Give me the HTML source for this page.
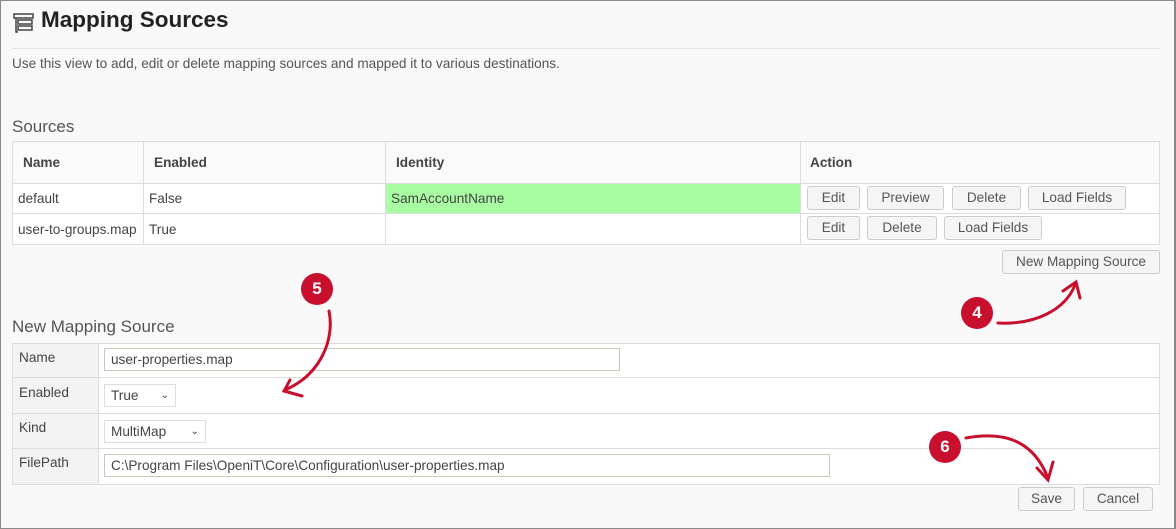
<!DOCTYPE html>
<html><head><style>
*{box-sizing:border-box;margin:0;padding:0}
body{width:1176px;height:529px;background:#f9f9f9;font-family:"Liberation Sans",sans-serif;color:#444;position:relative;overflow:hidden;font-size:13.6px}
.frame{position:absolute;left:0;top:0;width:1176px;height:529px;border:1px solid #8a8a8a;border-right:2px solid #8a8a8a}
.a{position:absolute}
.btn{position:absolute;height:24px;border:1px solid #ccc;border-radius:3px;background:#f5f5f5;color:#555;font-size:13.6px;line-height:22px;text-align:center}
table{border-collapse:collapse;position:absolute}
td{border:1px solid #ddd;font-size:13.6px}
.inp{position:absolute;height:23px;border:1px solid #ccc7b8;background:#fff;font-size:13.6px;line-height:21px;padding-left:6px;color:#444}
.badge{position:absolute;width:32px;height:32px;border-radius:50%;background:#c8102e;color:#fff;font-weight:bold;font-size:17px;text-align:center;line-height:32px}
</style></head><body>
<div class="frame"></div>
<svg class="a" style="left:13px;top:13px" width="22" height="22" viewBox="0 0 22 22" fill="none" stroke="#444" stroke-width="1.5"><rect x="1" y="1" width="19" height="4"/><rect x="5" y="7" width="14" height="4"/><rect x="5" y="13" width="14" height="4"/><path d="M3 5v14h2"/></svg>
<div class="a" style="left:41px;top:7px;font-size:22.5px;font-weight:bold;color:#222">Mapping Sources</div>
<div class="a" style="left:12px;top:48px;width:1148px;height:1px;background:#e3e3e3"></div>
<div class="a" style="left:12px;top:56px;color:#555">Use this view to add, edit or delete mapping sources and mapped it to various destinations.</div>
<div class="a" style="left:12px;top:117px;font-size:17px;color:#555">Sources</div>
<table style="left:12px;top:141px;width:1148px">
<tr style="height:42px;background:#fafafa"><td style="width:131px;padding-left:10px;font-weight:bold">Name</td><td style="width:242px;padding-left:10px;font-weight:bold">Enabled</td><td style="width:415px;padding-left:10px;font-weight:bold">Identity</td><td style="padding-left:9px;font-weight:bold">Action</td></tr>
<tr style="height:30px;background:#fff"><td style="padding-left:5px">default</td><td style="padding-left:5px">False</td><td style="padding-left:5px;background:#a8fda2">SamAccountName</td><td></td></tr>
<tr style="height:31px;background:#fff"><td style="padding-left:5px">user-to-groups.map</td><td style="padding-left:5px">True</td><td></td><td></td></tr>
</table>
<div class="btn" style="left:807px;top:186px;width:53px">Edit</div>
<div class="btn" style="left:867px;top:186px;width:77px">Preview</div>
<div class="btn" style="left:952px;top:186px;width:69px">Delete</div>
<div class="btn" style="left:1028px;top:186px;width:98px">Load Fields</div>
<div class="btn" style="left:807px;top:216px;width:53px">Edit</div>
<div class="btn" style="left:867px;top:216px;width:70px">Delete</div>
<div class="btn" style="left:944px;top:216px;width:98px">Load Fields</div>
<div class="btn" style="left:1002px;top:250px;width:158px">New Mapping Source</div>
<div class="a" style="left:12px;top:317px;font-size:17px;color:#555">New Mapping Source</div>
<table style="left:12px;top:343px;width:1148px">
<tr style="height:34px"><td style="width:86px;background:#f3f3f3;padding-left:6px;vertical-align:top;padding-top:6px">Name</td><td style="background:#fff"></td></tr>
<tr style="height:36px"><td style="background:#f3f3f3;padding-left:6px;vertical-align:top;padding-top:7px">Enabled</td><td style="background:#fff"></td></tr>
<tr style="height:35px"><td style="background:#f3f3f3;padding-left:6px;vertical-align:top;padding-top:6px">Kind</td><td style="background:#fff"></td></tr>
<tr style="height:36px"><td style="background:#f3f3f3;padding-left:6px;vertical-align:top;padding-top:6px">FilePath</td><td style="background:#fff"></td></tr>
</table>
<div class="inp" style="left:104px;top:348px;width:516px">user-properties.map</div>
<div class="inp" style="left:104px;top:384px;width:72px;border-color:#ddd">True<span style="position:absolute;right:6px;font-size:10px">&#8964;</span></div>
<div class="inp" style="left:104px;top:420px;width:102px;border-color:#ddd">MultiMap<span style="position:absolute;right:6px;font-size:10px">&#8964;</span></div>
<div class="inp" style="left:104px;top:454px;width:726px">C:\Program Files\OpeniT\Core\Configuration\user-properties.map</div>
<div class="btn" style="left:1018px;top:487px;width:57px">Save</div>
<div class="btn" style="left:1083px;top:487px;width:70px">Cancel</div>
<svg class="a" style="left:0;top:0" width="1176" height="529" fill="none" stroke="#c8102e" stroke-width="3" stroke-linecap="round">
<path d="M998 323 C1035 325 1065 310 1075 285"/><path d="M1063 291 L1076 282 L1080 298"/>
<path d="M329 311 C335 340 320 375 285 390"/><path d="M290 380 L284 391 L302 396"/>
<path d="M966 438 C1010 430 1035 445 1048 478"/><path d="M1037 468 L1048 480 L1053 462"/>
</svg>
<div class="badge" style="left:961px;top:297px">4</div>
<div class="badge" style="left:301px;top:273px">5</div>
<div class="badge" style="left:929px;top:431px">6</div>
</body></html>
